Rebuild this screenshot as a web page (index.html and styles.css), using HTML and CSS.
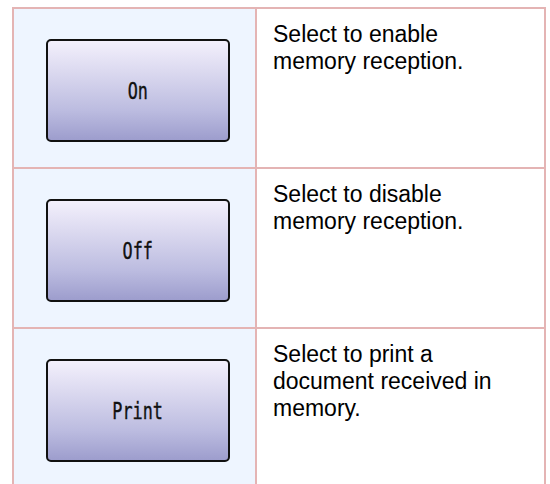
FILE: index.html
```html
<!DOCTYPE html>
<html lang="en">
<head>
  <meta charset="UTF-8">
  <title>Memory Reception</title>
  <link rel="stylesheet" href="styles.css">
</head>
<body>

<table class="keys">
  <tr>
    <td class="key-cell">
      <div class="key"><span class="key-label">On</span></div>
    </td>
    <td class="desc">Select to enable memory reception.</td>
  </tr>
  <tr>
    <td class="key-cell">
      <div class="key"><span class="key-label">Off</span></div>
    </td>
    <td class="desc">Select to disable memory reception.</td>
  </tr>
  <tr>
    <td class="key-cell">
      <div class="key"><span class="key-label">Print</span></div>
    </td>
    <td class="desc">Select to print a document received in memory.</td>
  </tr>
</table>

</body>
</html>
```

FILE: styles.css
```css
body {
  margin: 0;
  padding: 7px 0 0 12px;
  background: #ffffff;
  font-family: "Liberation Sans", Arial, sans-serif;
}

.keys {
  border-collapse: collapse;
  width: 534px;
}

.keys td {
  border: 2px solid #e4b4b4;
  vertical-align: top;
}

.key-cell {
  width: 241px;
  height: 158px;
  box-sizing: border-box;
  background-color: #eef5ff;
  padding: 30px 25px 25px 32px;
}

.key {
  width: 184px;
  height: 103px;
  box-sizing: border-box;
  border: 2px solid #111111;
  border-radius: 5px;
  background: linear-gradient(#f3f0fc, #dcdaf0 30%, #bcbce0 70%, #9d9dcd);
  display: flex;
  justify-content: center;
  align-items: center;
}

.key-label {
  display: inline-block;
  font-family: "DejaVu Sans Mono", "Liberation Mono", monospace;
  font-size: 23px;
  color: #111111;
  -webkit-text-stroke: 0.4px #111111;
  transform: scaleX(0.73);
}

.desc {
  padding: 12px 40px 10px 16px;
  font-size: 23px;
  line-height: 27px;
  color: #000000;
}
```
